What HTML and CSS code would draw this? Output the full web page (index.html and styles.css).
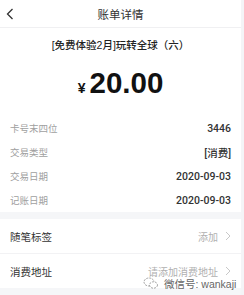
FILE: index.html
```html
<!DOCTYPE html>
<html lang="zh">
<head>
<meta charset="utf-8">
<link rel="stylesheet" href="styles.css">
</head>
<body>
<div class="page">
  <div class="header">
    <svg class="back" width="8" height="12" viewBox="0 0 8 12"><path d="M6.5 1 L1.5 6 L6.5 11" fill="none" stroke="#333" stroke-width="1.3"/></svg>
    <div class="title">账单详情</div>
  </div>
  <div class="summary">
    <div class="subtitle">[免费体验2月]玩转全球（六）</div>
    <div class="amount"><span class="yen">¥</span><span class="num">20.00</span></div>
  </div>
  <div class="details">
    <div class="row"><span class="label">卡号末四位</span><span class="value">3446</span></div>
    <div class="row"><span class="label">交易类型</span><span class="value">[消费]</span></div>
    <div class="row"><span class="label">交易日期</span><span class="value">2020-09-03</span></div>
    <div class="row"><span class="label">记账日期</span><span class="value">2020-09-03</span></div>
  </div>
  <div class="band"></div>
  <div class="actions">
    <div class="arow"><span class="alabel">随笔标签</span><span class="aval">添加<svg class="chev" width="6" height="10" viewBox="0 0 6 10"><path d="M1 1 L5 5 L1 9" fill="none" stroke="#c8c8c8" stroke-width="1"/></svg></span></div>
    <div class="arow"><span class="alabel">消费地址</span><span class="aval">请添加消费地址<svg class="chev" width="6" height="10" viewBox="0 0 6 10"><path d="M1 1 L5 5 L1 9" fill="none" stroke="#c8c8c8" stroke-width="1"/></svg></span></div>
  </div>
  <div class="watermark">
    <svg width="16" height="13" viewBox="0 0 16 13"><ellipse cx="6" cy="5" rx="5" ry="4" fill="none" stroke="#999" stroke-width="0.9" stroke-dasharray="2 1"/><ellipse cx="10.5" cy="8" rx="4" ry="3.2" fill="#fff" stroke="#999" stroke-width="0.9" stroke-dasharray="2 1"/></svg>
    <span>微信号: wankaji</span>
  </div>
</div>
</body>
</html>
```
FILE: styles.css
```css
html, body {
  margin: 0;
  padding: 0;
  background: #f4f4f7;
  font-family: "Liberation Sans", "Noto Sans CJK SC", sans-serif;
}
.page {
  position: relative;
  width: 241px;
  height: 295px;
  background: #f5f6f8;
}
.header {
  position: relative;
  height: 27px;
  background: #fff;
  border-bottom: 1px solid #f0f0f2;
  display: flex;
  align-items: center;
  justify-content: center;
}
.back {
  position: absolute;
  left: 6px;
  top: 8px;
}
.title {
  font-size: 11.5px;
  color: #333;
}
.summary {
  background: #fff;
  padding: 9px 0 13px;
  text-align: center;
}
.subtitle {
  font-size: 10.5px;
  line-height: 16px;
  color: #222;
  font-weight: 500;
}
.amount {
  margin-top: 15px;
  line-height: 30px;
  color: #111;
  display: flex;
  justify-content: center;
  align-items: baseline;
}
.yen {
  font-size: 14px;
  font-weight: bold;
  margin-right: 4px;
}
.num {
  font-size: 29.5px;
  font-weight: bold;
}
.details {
  background: #fff;
}
.row, .arow {
  display: flex;
  justify-content: space-between;
  align-items: center;
  padding: 0 10px;
}
.row {
  height: 24px;
}
.label {
  font-size: 9.5px;
  color: #a0a0a0;
}
.value {
  font-family: Roboto, "Noto Sans CJK SC", sans-serif;
  font-size: 10.5px;
  font-weight: 500;
  color: #333;
}
.band {
  height: 7px;
}
.actions {
  background: #fff;
}
.arow {
  height: 34px;
}
.arow + .arow {
  border-top: 1px solid #f2f2f4;
}
.alabel {
  font-size: 10.5px;
  color: #333;
}
.aval {
  display: flex;
  align-items: center;
  font-size: 10px;
  color: #b0b0b0;
}
.chev {
  margin-left: 7px;
}
.watermark {
  position: absolute;
  left: 143px;
  top: 276px;
  display: flex;
  align-items: center;
  gap: 5px;
  font-size: 10.5px;
  color: #666;
  text-shadow: 0 0 2px #fff;
}
```
